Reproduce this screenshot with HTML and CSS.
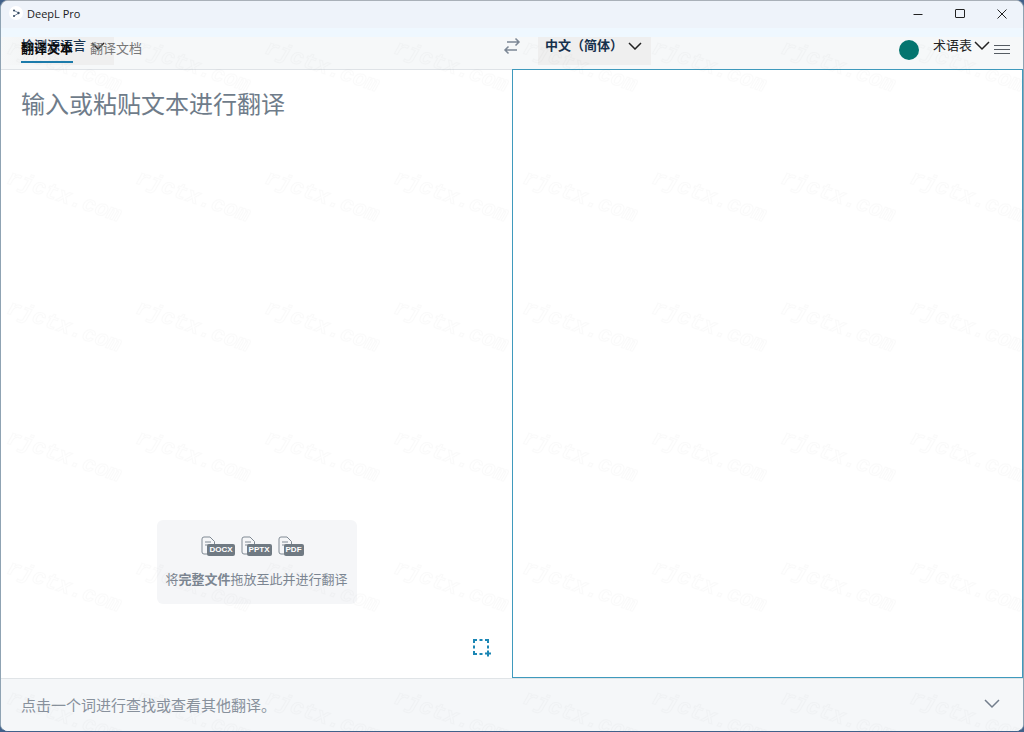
FILE: index.html
```html
<!DOCTYPE html>
<html lang="zh-CN">
<head>
<meta charset="utf-8">
<title>DeepL Pro</title>
<link rel="stylesheet" href="styles.css">
</head>
<body>
<div class="window">
  <header class="titlebar">
    <span class="app-logo"><svg width="15" height="15" viewBox="0 0 15 15"><circle cx="7" cy="7" r="7" fill="#fff"/><path d="M5 4.500l5 2.500-5 3" fill="none" stroke="#7d8ea3" stroke-width="1"/><circle cx="5" cy="4.500" r="1" fill="#33485f"/><circle cx="9.500" cy="7" r="1.200" fill="#33485f"/><circle cx="5" cy="10" r="1" fill="#33485f"/></svg></span>
    <span class="app-name">DeepL Pro</span>
    <div class="window-controls">
      <button aria-label="最小化"><svg width="12" height="12" viewBox="0 0 12 12"><path d="M1.500 6.500h9"/></svg></button>
      <button aria-label="最大化"><svg width="12" height="12" viewBox="0 0 12 12"><rect x="1.500" y="1.500" width="9" height="8" rx="0.500"/></svg></button>
      <button aria-label="关闭"><svg width="12" height="12" viewBox="0 0 12 12"><path d="M1.500 1.500l9 9M10.500 1.500l-9 9"/></svg></button>
    </div>
  </header>

  <div class="toolbar">
    <div class="toolbar-source">
      <nav class="tabs">
        <button class="tab tab-active">翻译文本</button>
        <button class="tab">翻译文档</button>
      </nav>
      <button class="language source-language">检测源语言<svg class="chevron" width="14" height="8" viewBox="0 0 14 8"><path d="M1 1l6 6 6-6"/></svg></button>
      <button class="swap" aria-label="交换语言"><svg width="18" height="18" viewBox="0 0 18 18"><path d="M4 5h12M12.500 1.500L16 5l-3.500 3.500M14 13H2M5.500 9.500L2 13l3.500 3.500"/></svg></button>
    </div>
    <div class="toolbar-target">
      <button class="language target-language">中文（简体）<svg class="chevron" width="14" height="8" viewBox="0 0 14 8"><path d="M1 1l6 6 6-6"/></svg></button>
      <button class="avatar" aria-label="账户"></button>
      <button class="glossary">术语表<svg class="chevron" width="16" height="10" viewBox="0 0 16 10"><path d="M1 1l7 7 7-7"/></svg></button>
      <button class="menu" aria-label="菜单"><svg width="18" height="12" viewBox="0 0 18 12"><path d="M1 1.500h16M1 5.500h16M1 9.500h16"/></svg></button>
    </div>
  </div>

  <main class="panes">
    <section class="pane-source">
      <textarea class="source-text" aria-label="源文本" placeholder="输入或粘贴文本进行翻译"></textarea>
      <div class="dropzone">
        <div class="file-types">
          <span class="file-type"><svg width="15" height="20" viewBox="0 0 15 20"><path d="M7 18H3q-2 0-2-2V3q0-2 2-2h6l4.500 4.500V12M4 6h6M4 9h6"/></svg><b>DOCX</b></span>
          <span class="file-type"><svg width="15" height="20" viewBox="0 0 15 20"><path d="M7 18H3q-2 0-2-2V3q0-2 2-2h6l4.500 4.500V12M4 6h6M4 9h6"/></svg><b>PPTX</b></span>
          <span class="file-type"><svg width="15" height="20" viewBox="0 0 15 20"><path d="M7 18H3q-2 0-2-2V3q0-2 2-2h6l4.500 4.500V12M4 6h6M4 9h6"/></svg><b>PDF</b></span>
        </div>
        <p class="drop-hint">将<strong>完整文件</strong>拖放至此并进行翻译</p>
      </div>
      <button class="capture" aria-label="截图翻译"><svg width="18" height="18" viewBox="0 0 18 18"><path d="M1 4V1h3M6.500 1h3M12 1h3v3M15 6.500v3M1 6.500v3M1 12v3h3M6.500 15h3M12 14.500h6M15 11.500v6"/></svg></button>
    </section>
    <section class="pane-target" aria-label="译文"></section>
  </main>

  <footer class="dictionary">
    <p>点击一个词进行查找或查看其他翻译。</p>
    <button class="expand" aria-label="展开"><svg class="chevron" width="16" height="10" viewBox="0 0 16 10"><path d="M1 1l7 7 7-7"/></svg></button>
  </footer>

  <svg class="watermark" aria-hidden="true">
    <defs>
      <pattern id="mark" x="5" y="32" width="129" height="130" patternUnits="userSpaceOnUse">
        <text class="watermark-text" x="0" y="20" transform="rotate(19 0 20)">rjctx.com</text>
      </pattern>
    </defs>
    <rect width="100%" height="100%" fill="url(#mark)"/>
  </svg>
</div>
</body>
</html>
```
FILE: styles.css
```css
* {
  box-sizing: border-box;
}

body {
  margin: 0;
  background: #41618a;
  font-family: "Liberation Sans", "Noto Sans CJK SC", sans-serif;
  font-size: 13px;
}

button {
  border: 0;
  padding: 0;
  background: none;
  font: inherit;
  color: inherit;
}

p {
  margin: 0;
}

svg {
  display: block;
  fill: none;
  stroke: currentColor;
}

.window {
  position: relative;
  display: flex;
  flex-direction: column;
  min-height: 100vh;
  overflow: hidden;
  border: 1px solid #8fa3b3;
  border-top-color: #a9b0b8;
  border-bottom-color: #41618a;
  border-radius: 8px;
  background: #fff;
}

.titlebar {
  display: flex;
  align-items: flex-start;
  height: 36px;
  padding: 5px 0 0 8px;
  background: linear-gradient(#eef3fa 27px, #eff8ff 27px);
}

.app-logo svg {
  stroke: none;
}

.app-name {
  margin-left: 3px;
  font: 11px/16px "Open Sans", sans-serif;
  color: #1b1b1b;
}

.window-controls {
  display: flex;
  gap: 30px;
  margin-left: auto;
  padding-right: 15px;
  color: #222;
}

.window-controls svg {
  margin-top: 2px;
}

.toolbar {
  display: grid;
  grid-template-columns: 1fr 1fr;
  height: 32px;
  background: #f6f8f9;
}

.toolbar-source,
.toolbar-target {
  position: relative;
  display: flex;
  align-items: flex-start;
}

.toolbar-source {
  padding-left: 20px;
}

.tabs {
  display: flex;
  gap: 17px;
  position: relative;
  z-index: 1;
}

.tab {
  height: 26px;
  border-bottom: 2px solid transparent;
  line-height: 24px;
  color: #777;
}

.tab-active {
  border-bottom-color: #1b7bab;
  font-weight: 700;
  color: #0b0b0b;
}

.language {
  display: flex;
  align-items: center;
  background: #efefef;
  line-height: 18px;
  color: #16304c;
}

.language .chevron {
  color: #222;
  stroke-width: 1.500;
}

.source-language {
  position: absolute;
  top: 0;
  left: 0;
  gap: 5px;
  height: 28px;
  padding: 0 9px 10px 20px;
  background: linear-gradient(90deg, #f6f8f9, #efefef 60%);
  font-weight: 500;
}

.swap {
  margin-left: auto;
  margin-right: -9px;
  color: #7c8795;
}

.swap svg {
  stroke-width: 1.500;
}

.target-language {
  gap: 5px;
  height: 28px;
  margin-left: 26px;
  padding: 0 9px 10px 7px;
  font-weight: 700;
}

.avatar {
  width: 20px;
  height: 20px;
  margin: 3px 14px 0 auto;
  border-radius: 50%;
  background: #04756f;
}

.glossary {
  display: flex;
  align-items: center;
  gap: 2px;
  line-height: 18px;
  color: #222;
}

.glossary .chevron {
  stroke-width: 1.500;
}

.menu {
  margin: 7px 12px 0 3px;
  color: #555c63;
}

.menu svg {
  stroke-width: 1;
}

.panes {
  flex: 1;
  display: grid;
  grid-template-columns: 1fr 1fr;
}

.pane-source {
  display: flex;
  flex-direction: column;
  border-top: 1px solid #dfe3e7;
}

.source-text {
  flex: 1;
  border: 0;
  padding: 17px 20px;
  outline: 0;
  resize: none;
  background: none;
  font: 24px/36px "Liberation Sans", "Noto Sans CJK SC", sans-serif;
}

.source-text::placeholder {
  color: #6f7c8a;
}

.dropzone {
  display: flex;
  flex-direction: column;
  align-items: center;
  align-self: center;
  gap: 14px;
  width: 200px;
  padding: 16px 0 14px;
  border-radius: 6px;
  background: #f5f6f8;
  color: #7c8692;
}

.file-types {
  display: flex;
  gap: 6px;
  margin-right: 8px;
}

.file-type {
  display: flex;
  align-items: flex-end;
  color: #808a94;
}

.file-type b {
  margin: 0 0 0 -9px;
  padding: 0 2px;
  border-radius: 2px;
  background: #707a83;
  font-size: 8px;
  line-height: 12px;
  color: #fff;
}

.drop-hint {
  line-height: 20px;
  white-space: nowrap;
}

.capture {
  align-self: flex-end;
  margin: 35px 21px 21px 0;
  color: #1b86b4;
}

.capture svg {
  stroke-width: 2;
}

.pane-target {
  border: 1px solid #3f9abd;
}

.dictionary {
  display: flex;
  align-items: center;
  justify-content: space-between;
  height: 53px;
  padding: 0 23px 2px 20px;
  border-top: 1px solid #e0e4e7;
  background: #f5f7f9;
  font-size: 15px;
  color: #88919c;
}

.expand .chevron {
  color: #737e8c;
  stroke-width: 1.500;
}

.watermark {
  position: absolute;
  inset: 0;
  width: 100%;
  height: 100%;
  stroke: none;
  pointer-events: none;
}

.watermark-text {
  font: italic bold 22px "Liberation Mono", monospace;
  fill: none;
  stroke: rgba(0, 0, 0, 0.02);
  stroke-width: 1;
}
```
